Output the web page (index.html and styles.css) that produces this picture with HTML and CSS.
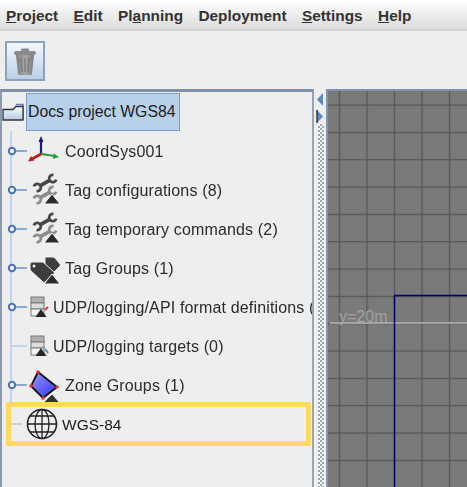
FILE: index.html
```html
<!DOCTYPE html>
<html>

<head>
  <meta charset="utf-8">
  <title>Docs project WGS84</title>
  <link rel="stylesheet" href="styles.css">
</head>

<body>
  <svg class="defs" width="0" height="0">
    <defs>
      <g id="wrench">
        <path d="M-7 0H7" stroke-width="4"/>
        <path d="M12.600 -3A4 4 0 1 0 12.600 3" fill="none" stroke-width="3"/>
        <path d="M-12.600 -3A4 4 0 1 1 -12.600 3" fill="none" stroke-width="3"/>
      </g>
      <linearGradient id="fold" x1="0" y1="0" x2="0" y2="1">
        <stop offset="0" stop-color="#fafcff"/>
        <stop offset="1" stop-color="#b4cbe4"/>
      </linearGradient>
      <linearGradient id="zone" x1="0" y1="0" x2="1" y2="1">
        <stop offset="0" stop-color="#9a9aff"/>
        <stop offset="1" stop-color="#3030ee"/>
      </linearGradient>
      <linearGradient id="bin" x1="0" y1="0" x2="1" y2="0">
        <stop offset="0" stop-color="#7c7c7c"/>
        <stop offset="0.500" stop-color="#a8a8a8"/>
        <stop offset="1" stop-color="#7c7c7c"/>
      </linearGradient>
    </defs>
  </svg>

  <div class="menubar">
    <span class="menu"><u>P</u>roject</span>
    <span class="menu"><u>E</u>dit</span>
    <span class="menu">Pl<u>a</u>nning</span>
    <span class="menu">Deployment</span>
    <span class="menu"><u>S</u>ettings</span>
    <span class="menu"><u>H</u>elp</span>
  </div>

  <div class="toolbar">
    <div class="toolbtn">
      <svg width="22" height="27" viewBox="0 0 22 27">
        <rect x="0" y="3" width="22" height="4" rx="2" fill="#8a8a8a"/>
        <rect x="7" y="0.500" width="8" height="3" rx="1" fill="#8a8a8a"/>
        <path d="M2 7h18l-2 19q0 1-1 1H5q-1 0-1-1z" fill="url(#bin)"/>
        <path d="M7 10l1 14M11 10v14M15 10l-1 14" stroke="#777" stroke-width="1.200" fill="none"/>
      </svg>
    </div>
  </div>

  <div class="main">
    <div class="treepanel">
      <div class="rootrow">
        <svg class="foldericon" width="22" height="18" viewBox="0 0 22 18">
          <path d="M14 1.500h7v15" fill="none" stroke="#5b7fb5" stroke-width="1.500"/>
          <path d="M1 6.500h10l3-3h7v13.500H1z" fill="url(#fold)" stroke="#2e3540" stroke-width="1.300"/>
        </svg>
        <span class="rootlabel">Docs project WGS84</span>
      </div>

      <div class="children">
        <div class="row">
          <svg class="knob" width="22" height="10" viewBox="0 0 22 10"><path d="M11 5h11" stroke="#8faad0" stroke-width="2"/><circle cx="7" cy="5" r="3.200" fill="#eeeeee" stroke="#4a74b8" stroke-width="2"/></svg>
          <svg class="icon" width="38" height="30" viewBox="0 0 38 30">
            <path d="M14 18V3" stroke="#1a1a7a" stroke-width="2.200"/>
            <path d="M14 0l-2.500 6h5z" fill="#1a1a7a"/>
            <path d="M14 18L28 20" stroke="#2a9a3a" stroke-width="2.200"/>
            <path d="M32 21l-6 2 .8-5.500z" fill="#2a9a3a"/>
            <path d="M14 18L5 23" stroke="#b02020" stroke-width="2.600"/>
            <path d="M1 25.500l3-5.500 3.500 4.500z" fill="#b02020"/>
          </svg>
          <span class="label">CoordSys001</span>
        </div>

        <div class="row">
          <svg class="knob" width="22" height="10" viewBox="0 0 22 10"><path d="M11 5h11" stroke="#8faad0" stroke-width="2"/><circle cx="7" cy="5" r="3.200" fill="#eeeeee" stroke="#4a74b8" stroke-width="2"/></svg>
          <svg class="icon" width="38" height="34" viewBox="0 0 38 34">
            <use href="#wrench" transform="translate(18 10) rotate(-30) scale(.9)" stroke="#474747"/>
            <use href="#wrench" transform="translate(18 22) rotate(-30) scale(.9)" stroke="#8c8c8c"/>
            <path d="M25 21l8 10H17z" fill="#2b2b2b" stroke="#f6f6f6" stroke-width="1"/>
          </svg>
          <span class="label">Tag configurations (8)</span>
        </div>

        <div class="row">
          <svg class="knob" width="22" height="10" viewBox="0 0 22 10"><path d="M11 5h11" stroke="#8faad0" stroke-width="2"/><circle cx="7" cy="5" r="3.200" fill="#eeeeee" stroke="#4a74b8" stroke-width="2"/></svg>
          <svg class="icon" width="38" height="34" viewBox="0 0 38 34">
            <use href="#wrench" transform="translate(18 10) rotate(-30) scale(.9)" stroke="#474747"/>
            <use href="#wrench" transform="translate(18 22) rotate(-30) scale(.9)" stroke="#8c8c8c"/>
            <path d="M25 21l8 10H17z" fill="#2b2b2b" stroke="#f6f6f6" stroke-width="1"/>
          </svg>
          <span class="label">Tag temporary commands (2)</span>
        </div>

        <div class="row">
          <svg class="knob" width="22" height="10" viewBox="0 0 22 10"><path d="M11 5h11" stroke="#8faad0" stroke-width="2"/><circle cx="7" cy="5" r="3.200" fill="#eeeeee" stroke="#4a74b8" stroke-width="2"/></svg>
          <svg class="icon" width="38" height="34" viewBox="0 0 38 34">
            <path d="M18 6h8q1 0 2 1l5 6q1 1 0 2l-7 7-8-9z" fill="#3d3d3d" stroke="#eeeeee" stroke-width="1"/>
            <path d="M5 11h11l11 10q1 1 0 2l-9 8q-1 1-2 0L4 20q-1-1-1-2v-5q0-2 2-2z" fill="#3d3d3d" stroke="#eeeeee" stroke-width="1"/>
            <circle cx="7" cy="15" r="1.500" fill="#eeeeee"/>
            <path d="M25 23l8 10H17z" fill="#2b2b2b" stroke="#f6f6f6" stroke-width="1"/>
          </svg>
          <span class="label">Tag Groups (1)</span>
        </div>

        <div class="row">
          <svg class="knob" width="22" height="10" viewBox="0 0 22 10"><path d="M11 5h11" stroke="#8faad0" stroke-width="2"/><circle cx="7" cy="5" r="3.200" fill="#eeeeee" stroke="#4a74b8" stroke-width="2"/></svg>
          <svg class="icon small" width="22" height="24" viewBox="0 0 22 24">
            <rect x="1" y="2" width="13" height="6" fill="#b0b0b0" stroke="#7a7a7a"/>
            <rect x="1" y="8" width="13" height="6" fill="#dcdcdc" stroke="#7a7a7a"/>
            <rect x="1" y="14" width="13" height="7" fill="#f4f4f4" stroke="#7a7a7a"/>
            <path d="M15 15l3-3" stroke="#dd3a3a" stroke-width="2"/>
            <path d="M11 14l5.500 8H5.500z" fill="#262626"/>
          </svg>
          <span class="label">UDP/logging/API format definitions (</span>
        </div>

        <div class="row">
          <svg class="knob" width="22" height="10" viewBox="0 0 22 10"><path d="M7 5h15" stroke="#c3d4ea" stroke-width="2"/></svg>
          <svg class="icon small" width="22" height="24" viewBox="0 0 22 24">
            <rect x="1" y="2" width="13" height="6" fill="#b0b0b0" stroke="#7a7a7a"/>
            <rect x="1" y="8" width="13" height="6" fill="#dcdcdc" stroke="#7a7a7a"/>
            <rect x="1" y="14" width="13" height="7" fill="#f4f4f4" stroke="#7a7a7a"/>
            <path d="M15 15l3 4" stroke="#4a90c8" stroke-width="2"/>
            <path d="M11 14l5.500 8H5.500z" fill="#262626"/>
          </svg>
          <span class="label">UDP/logging targets (0)</span>
        </div>

        <div class="row">
          <svg class="knob" width="22" height="10" viewBox="0 0 22 10"><path d="M11 5h11" stroke="#8faad0" stroke-width="2"/><circle cx="7" cy="5" r="3.200" fill="#eeeeee" stroke="#4a74b8" stroke-width="2"/></svg>
          <svg class="icon" width="38" height="34" viewBox="0 0 38 34">
            <path d="M25 26l8 9H16z" fill="#333" stroke="#e4e4e4" stroke-width="1"/>
            <path d="M11 4L30 19 16 30 4 18z" fill="url(#zone)" stroke="#111" stroke-width="1.800"/>
            <circle cx="11" cy="4" r="1.800" fill="#ee3333"/>
            <circle cx="30" cy="19" r="1.800" fill="#ee3333"/>
            <circle cx="16" cy="30" r="1.800" fill="#ee3333"/>
            <circle cx="4" cy="18" r="1.800" fill="#ee3333"/>
          </svg>
          <span class="label">Zone Groups (1)</span>
        </div>
      </div>

      <div class="selectedrow">
        <div class="stub"></div>
        <svg class="globe" width="32" height="32" viewBox="0 0 32 32" fill="none" stroke="#222" stroke-width="1.300">
          <circle cx="16" cy="16" r="14.500" stroke-width="1.600"/>
          <ellipse cx="16" cy="16" rx="7" ry="14.500"/>
          <path d="M16 1.500v29M1.500 16h29M4 8h24M4 24h24"/>
        </svg>
        <span class="selectedlabel">WGS-84</span>
      </div>
    </div>

    <div class="divider">
      <svg class="arrows" width="8" height="32" viewBox="0 0 8 32">
        <path d="M7 1v13L1 7.500z" fill="#5c88cc"/>
        <path d="M1 18v13l6-6.500z" fill="#5c88cc"/>
        <path d="M1 18v13" stroke="#333" stroke-width="1.500"/>
      </svg>
      <div class="dots"></div>
    </div>

    <div class="canvas">
      <svg width="139" height="396" viewBox="0 0 139 396">
        <defs>
          <pattern id="grid" x="10.800" y="13.500" width="27.500" height="27.330" patternUnits="userSpaceOnUse">
            <path d="M0.500 0v27.330M0 0.500h27.500" stroke="#555" stroke-width="1.500" fill="none"/>
          </pattern>
        </defs>
        <rect width="139" height="396" fill="#7a7a7a"/>
        <rect width="139" height="396" fill="url(#grid)"/>
        <path d="M2 232h137" stroke="#a3a3a3" stroke-width="2"/>
        <path d="M66.500 396V204.500h72.500" fill="none" stroke="#00006e" stroke-width="1.500"/>
        <text x="11" y="231" class="gridtext">y=20m</text>
      </svg>
    </div>
  </div>
</body>

</html>
```

FILE: styles.css
```css
html, body {
  margin: 0;
  padding: 0;
}

body {
  width: 467px;
  height: 487px;
  overflow: hidden;
  background-color: #eeeeee;
  font-family: "Liberation Sans", Arial, sans-serif;
  color: #2b2b2b;
  filter: blur(0.5px);
}

.defs {
  display: block;
}

.menubar {
  display: flex;
  align-items: center;
  gap: 15.400px;
  height: 31px;
  padding: 2px 0 0 6px;
  box-sizing: border-box;
  background: linear-gradient(#ffffff, #dcdcdc);
  border-bottom: 2px solid #d2d2d2;
  font-size: 15.400px;
  font-weight: bold;
  color: #333333;
}

.toolbar {
  height: 58px;
  box-sizing: border-box;
  padding: 10px 5px 0;
}

.toolbtn {
  display: flex;
  align-items: center;
  justify-content: center;
  width: 40px;
  height: 40px;
  box-sizing: border-box;
  border: 2px solid #8ba3bb;
  background: linear-gradient(#f4f8fc, #b9d0e8);
}

.main {
  display: flex;
  height: 398px;
}

.treepanel {
  width: 314px;
  box-sizing: border-box;
  border-top: 3px solid #7f8fa3;
  border-left: 2px solid #8b9bb0;
  border-right: 2px solid #95a5b8;
  font-size: 16px;
}

.rootrow {
  display: flex;
  align-items: center;
  height: 39px;
}

.foldericon {
  margin-right: 2px;
}

.rootlabel {
  display: flex;
  align-items: center;
  width: 154px;
  height: 38px;
  padding-left: 1px;
  box-sizing: border-box;
  background-color: #b8d0ea;
  border: 1px solid #7d9cc8;
  font-size: 15.800px;
  white-space: nowrap;
  color: #1c1c1c;
}

.children {
  margin-left: 8px;
  border-left: 2px solid #c3d4ea;
}

.row {
  display: flex;
  align-items: center;
  height: 39px;
}

.knob {
  margin-left: -7px;
  flex-shrink: 0;
}

.icon {
  flex-shrink: 0;
}

.icon.small {
  margin-left: 3px;
  margin-right: 1px;
}

.label {
  padding-top: 2px;
  white-space: nowrap;
  overflow: hidden;
  letter-spacing: 0.150px;
}

.selectedrow {
  display: flex;
  align-items: center;
  width: 305px;
  height: 44px;
  margin: -2px 0 0 4px;
  box-sizing: border-box;
  border: 5px solid #fbd963;
  border-radius: 2px;
  color: #1c1c1c;
}

.stub {
  width: 11px;
  height: 2px;
  background-color: #c3d4ea;
}

.globe {
  margin: 0 4px 0 4px;
}

.selectedlabel {
  padding-top: 2px;
  font-size: 15.500px;
}

.divider {
  display: flex;
  flex-direction: column;
  width: 12px;
  box-sizing: border-box;
  padding: 3px 0 0 2px;
}

.arrows {
  display: block;
}

.dots {
  flex: 1;
  width: 6px;
  margin: 0 0 0 2px;
  background: repeating-conic-gradient(#9aa8b4 0 25%, #f8f8f8 0 50%) 0 0 / 4px 4px;
}

.canvas {
  flex: 1;
  box-sizing: border-box;
  border-top: 2px solid #8094ab;
  border-left: 2px solid #8094ab;
  overflow: hidden;
}

.canvas svg {
  display: block;
}

.gridtext {
  font-family: "Liberation Sans", Arial, sans-serif;
  font-size: 16px;
  fill: #a3a3a3;
}
```
